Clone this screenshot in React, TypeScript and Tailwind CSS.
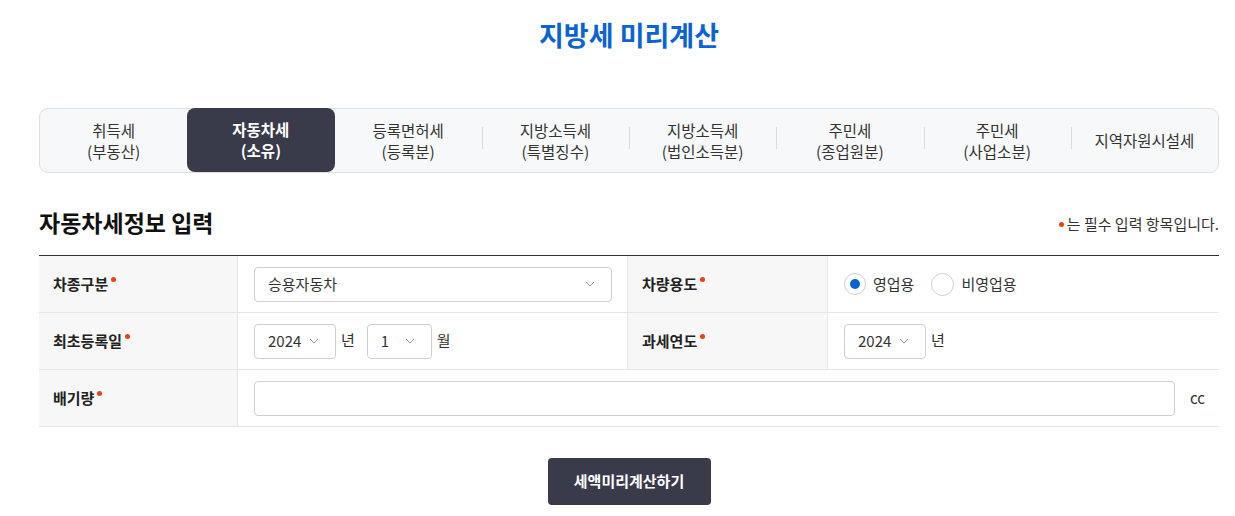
import React from "react";

const FONT = { fontFamily: '"Noto Sans CJK KR", "Noto Sans", sans-serif' };

const Dot = () => (
  <span className="inline-block w-[5px] h-[5px] rounded-full bg-[#e8430f] ml-[3px] relative top-[-5px]" />
);

const Chevron = () => (
  <svg width="10" height="6" viewBox="0 0 10 6" className="shrink-0">
    <path d="M1 1 L5 5 L9 1" fill="none" stroke="#9a9a9a" strokeWidth="1" />
  </svg>
);

const Select = ({ value, w }: { value: string; w: string }) => (
  <div
    className={`${w} h-[35px] border border-[#cfcfcf] rounded-[4px] bg-white flex items-center justify-between pl-[13px] pr-[16px] text-[15px] text-[#333]`}
  >
    <span>{value}</span>
    <Chevron />
  </div>
);

const tabs: { l1: string; l2?: string }[] = [
  { l1: "취득세", l2: "(부동산)" },
  { l1: "자동차세", l2: "(소유)" },
  { l1: "등록면허세", l2: "(등록분)" },
  { l1: "지방소득세", l2: "(특별징수)" },
  { l1: "지방소득세", l2: "(법인소득분)" },
  { l1: "주민세", l2: "(종업원분)" },
  { l1: "주민세", l2: "(사업소분)" },
  { l1: "지역자원시설세" },
];

const LabelCell = ({ text, extra }: { text: string; extra?: string }) => (
  <div
    className={`bg-[#f7f7f7] border-r border-[#e6e6e6] flex items-center pl-[14px] text-[15px] font-bold text-[#222] ${extra ?? ""}`}
  >
    <span>{text}</span>
    <Dot />
  </div>
);

export default function App() {
  return (
    <div className="w-[1235px] h-[516px] bg-white overflow-hidden" style={FONT}>
      <div className="ml-[39px] w-[1180px]">
        <div className="h-[70px] flex items-center justify-center">
          <h1 className="text-[27px] font-bold text-[#0b63d3]">지방세 미리계산</h1>
        </div>

        {/* Tabs */}
        <div className="mt-[38px] h-[65px] border border-[#e0e0e0] rounded-[9px] bg-[#f7f8fa] flex">
          {tabs.map((t, i) => {
            const active = i === 1;
            const showSep = i >= 3;
            return (
              <div key={i} className="flex-1 relative flex items-center justify-center">
                {showSep && (
                  <div className="absolute left-0 top-[18px] w-px h-[22px] bg-[#dcdcdc]" />
                )}
                <div
                  className={`w-full h-[64px] flex flex-col items-center justify-center text-[15.5px] leading-[21px] ${
                    active
                      ? "bg-[#393a4a] text-white font-bold rounded-[8px] -mt-px"
                      : "text-[#333]"
                  }`}
                >
                  <span>{t.l1}</span>
                  {t.l2 && <span>{t.l2}</span>}
                </div>
              </div>
            );
          })}
        </div>

        {/* Heading */}
        <div className="mt-[34px] flex items-end justify-between h-[30px]">
          <h2 className="text-[23px] font-bold text-[#111] leading-[30px]">자동차세정보 입력</h2>
          <div className="text-[15px] text-[#333] flex items-center mb-[2px]">
            <span className="inline-block w-[5px] h-[5px] rounded-full bg-[#e8430f] mr-[3px] mt-[2px]" />
            <span>는 필수 입력 항목입니다.</span>
          </div>
        </div>

        {/* Table */}
        <div className="mt-[18px] border-t border-[#333] grid grid-cols-[199px_390px_200px_1fr]">
          {/* row 1 */}
          <LabelCell text="차종구분" extra="h-[57px] border-b" />
          <div className="h-[57px] border-b border-[#e6e6e6] border-r flex items-center pl-4 pr-[15px]">
            <Select value="승용자동차" w="w-full" />
          </div>
          <LabelCell text="차량용도" extra="h-[57px] border-b" />
          <div className="h-[57px] border-b border-[#e6e6e6] flex items-center pl-4 text-[15px] text-[#333]">
            <span className="w-[22px] h-[22px] rounded-full border border-[#cfcfcf] bg-white flex items-center justify-center">
              <span className="w-[10px] h-[10px] rounded-full bg-[#0b63d3]" />
            </span>
            <span className="ml-[7px]">영업용</span>
            <span className="ml-[17px] w-[23px] h-[23px] rounded-full border border-[#cfcfcf] bg-white" />
            <span className="ml-[7px]">비영업용</span>
          </div>

          {/* row 2 */}
          <LabelCell text="최초등록일" extra="h-[57px] border-b" />
          <div className="h-[57px] border-b border-[#e6e6e6] border-r flex items-center pl-4 text-[15px] text-[#333]">
            <Select value="2024" w="w-[82px]" />
            <span className="ml-[5px] self-start mt-[16px]">년</span>
            <div className="ml-[12px]">
              <Select value="1" w="w-[65px]" />
            </div>
            <span className="ml-[5px] self-start mt-[16px]">월</span>
          </div>
          <LabelCell text="과세연도" extra="h-[57px] border-b" />
          <div className="h-[57px] border-b border-[#e6e6e6] flex items-center pl-4 text-[15px] text-[#333]">
            <Select value="2024" w="w-[82px]" />
            <span className="ml-[5px] self-start mt-[16px]">년</span>
          </div>

          {/* row 3 */}
          <LabelCell text="배기량" extra="h-[57px] border-b" />
          <div className="col-span-3 h-[57px] border-b border-[#e6e6e6] flex items-center pl-4 pr-[14px] text-[15px] text-[#333]">
            <div className="flex-1 h-[35px] border border-[#cfcfcf] rounded-[4px] bg-white" />
            <span className="ml-[15px]">cc</span>
          </div>
        </div>

        {/* Button */}
        <div className="mt-[31px] flex justify-center">
          <button className="w-[163px] h-[47px] rounded-[4px] bg-[#393a4a] text-white text-[15px] font-bold">
            세액미리계산하기
          </button>
        </div>
      </div>
    </div>
  );
}
